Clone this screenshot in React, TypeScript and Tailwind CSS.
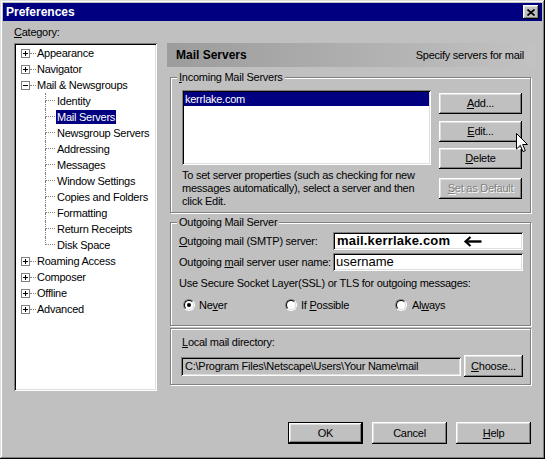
import React from "react";

const raised =
  "shadow-[inset_-1px_-1px_#000,inset_1px_1px_#fff,inset_-2px_-2px_#808080,inset_2px_2px_#dfdfdf]";
const sunken =
  "shadow-[inset_1px_1px_#808080,inset_-1px_-1px_#fff,inset_2px_2px_#000,inset_-2px_-2px_#dfdfdf]";
const etched = "border border-[#808080] shadow-[inset_1px_1px_#fff,1px_1px_#fff]";

function Box({ open }: { open?: boolean }) {
  return (
    <div className="ml-[5px] grid h-[9px] w-[9px] place-items-center border border-[#808080] bg-white">
      <div className="col-start-1 row-start-1 h-[1px] w-[5px] bg-black" />
      {!open && <div className="col-start-1 row-start-1 h-[5px] w-[1px] bg-black" />}
    </div>
  );
}

function TopRow({ label, open }: { label: string; open?: boolean }) {
  return (
    <div className="flex h-[16px] items-center">
      <Box open={open} />
      <div className="h-0 w-[6px] border-t border-dotted border-[#808080]" />
      <span className="ml-[1px] whitespace-nowrap">{label}</span>
    </div>
  );
}

function ChildRow({ label, last, selected }: { label: string; last?: boolean; selected?: boolean }) {
  return (
    <div className="flex h-[16px]">
      <div className="ml-[29px] flex w-[10px] flex-col">
        <div className="h-[8px] border-b border-l border-dotted border-[#808080]" />
        <div className={last ? "h-[8px]" : "h-[8px] border-l border-dotted border-[#808080]"} />
      </div>
      <span
        className={
          selected
            ? "ml-[1px] self-center whitespace-nowrap bg-[#000080] px-[1px] leading-[14px] text-white"
            : "ml-[1px] self-center whitespace-nowrap px-[1px] leading-[14px]"
        }
      >
        {label}
      </span>
    </div>
  );
}

function Btn({ children, className }: { children: React.ReactNode; className?: string }) {
  return (
    <div className={`flex items-center justify-center bg-[#c0c0c0] ${raised} ${className ?? ""}`}>{children}</div>
  );
}

function Radio({ checked }: { checked?: boolean }) {
  return (
    <div className="h-[12px] w-[12px] rounded-full border border-b-white border-l-[#808080] border-r-white border-t-[#808080]">
      <div className="flex h-full w-full items-center justify-center rounded-full border border-b-[#dfdfdf] border-l-black border-r-[#dfdfdf] border-t-black bg-white">
        {checked && <div className="h-[4px] w-[4px] rounded-full bg-black" />}
      </div>
    </div>
  );
}

export default function App() {
  return (
    <div className="flex h-[459px] w-[545px] flex-col bg-[#c0c0c0] p-[3px] font-['Liberation_Sans',Arial,sans-serif] text-[11px] leading-[13px] tracking-[-0.25px] text-black shadow-[inset_-1px_-1px_#000,inset_1px_1px_#dfdfdf,inset_-2px_-2px_#808080,inset_2px_2px_#fff]">
      {/* Title bar */}
      <div className="flex h-[18px] items-center justify-between bg-[#000080] pl-[3px] pr-[3px]">
        <span className="text-[12px] font-bold leading-[14px] tracking-normal text-white">Preferences</span>
        <div className={`flex h-[14px] w-[16px] items-center justify-center bg-[#c0c0c0] ${raised}`}>
          <svg width="8" height="7" viewBox="0 0 8 7">
            <path d="M0.5 0.5 L7.5 6.5 M7.5 0.5 L0.5 6.5" stroke="#000" strokeWidth="1.7" fill="none" />
          </svg>
        </div>
      </div>

      <div className="flex">
        {/* Left: category tree */}
        <div className="ml-[11px] flex w-[143px] flex-col">
          <div className="mt-[5px] h-[13px]">
            <u>C</u>ategory:
          </div>
          <div className={`mt-[4px] h-[348px] bg-white p-[2px] ${sunken}`}>
            <TopRow label="Appearance" />
            <TopRow label="Navigator" />
            <TopRow label="Mail & Newsgroups" open />
            <ChildRow label="Identity" />
            <ChildRow label="Mail Servers" selected />
            <ChildRow label="Newsgroup Servers" />
            <ChildRow label="Addressing" />
            <ChildRow label="Messages" />
            <ChildRow label="Window Settings" />
            <ChildRow label="Copies and Folders" />
            <ChildRow label="Formatting" />
            <ChildRow label="Return Receipts" />
            <ChildRow label="Disk Space" last />
            <TopRow label="Roaming Access" />
            <TopRow label="Composer" />
            <TopRow label="Offline" />
            <TopRow label="Advanced" />
          </div>
        </div>

        {/* Right panel */}
        <div className="ml-[10px] mt-[22px] flex w-[369px] flex-col">
          <div className="flex h-[24px] items-center justify-between bg-gradient-to-r from-[#9c9c9c] to-[#c2c2c2] pl-[9px] pr-[12px]">
            <span className="text-[12px] font-bold tracking-normal">Mail Servers</span>
            <span>Specify servers for mail</span>
          </div>

          {/* Incoming */}
          <div className={`relative ml-[3px] mr-[5px] mt-[10px] h-[136px] ${etched}`}>
            <span className="absolute -top-[7px] left-[6px] whitespace-nowrap bg-[#c0c0c0] px-[2px]">
              <u>I</u>ncoming Mail Servers
            </span>
            <div className="flex pl-[11px] pt-[12px]">
              <div className="flex w-[249px] flex-col">
                <div className={`h-[75px] bg-white p-[2px] ${sunken}`}>
                  <div className="flex h-[14px] items-center bg-[#000080] pl-[1px] text-white">kerrlake.com</div>
                </div>
                <div className="mt-[4px] whitespace-nowrap leading-[13px]">
                  To set server properties (such as checking for new
                  <br />
                  messages automatically), select a server and then
                  <br />
                  click Edit.
                </div>
              </div>
              <div className="ml-[8px] flex w-[83px] flex-col pt-[3px]">
                <Btn className="h-[21px]">
                  <span>
                    <u>A</u>dd...
                  </span>
                </Btn>
                <Btn className="relative mt-[7px] h-[21px]">
                  <span>
                    <u>E</u>dit...
                  </span>
                  <svg
                    className="absolute left-[77px] top-[12px]"
                    width="12"
                    height="20"
                    viewBox="0 0 12 20"
                  >
                    <path
                      d="M0.5 0.5 V16 L4.3 12.3 L7 18.6 L9.3 17.6 L6.7 11.5 H11.5 Z"
                      fill="#fff"
                      stroke="#000"
                      strokeWidth="1"
                    />
                  </svg>
                </Btn>
                <Btn className="mt-[6px] h-[21px]">
                  <span>
                    <u>D</u>elete
                  </span>
                </Btn>
                <Btn className="mt-[9px] h-[21px]">
                  <span className="whitespace-nowrap text-[#808080] [text-shadow:1px_1px_0_#fff]">
                    <u>S</u>et as Default
                  </span>
                </Btn>
              </div>
            </div>
          </div>

          {/* Outgoing */}
          <div className={`relative ml-[3px] mr-[5px] mt-[9px] h-[104px] ${etched}`}>
            <span className="absolute -top-[7px] left-[6px] whitespace-nowrap bg-[#c0c0c0] px-[2px]">
              Outgoing Mail Server
            </span>
            <div className="flex flex-col pl-[8px] pr-[7px] pt-[9px]">
              <div className="flex h-[18px] items-center">
                <span className="flex-1 whitespace-nowrap">
                  <u>O</u>utgoing mail (SMTP) server:
                </span>
                <div className={`flex h-[18px] w-[190px] shrink-0 items-center bg-white pl-[4px] ${sunken}`}>
                  <span className="whitespace-nowrap text-[13px] font-bold leading-[16px] tracking-[0.2px]">
                    mail.kerrlake.com
                  </span>
                  <svg className="ml-[13px]" width="19" height="11" viewBox="0 0 19 11">
                    <path d="M18.5 5.5 H3" stroke="#000" strokeWidth="2.4" fill="none" />
                    <path d="M7.5 1 L2.5 5.5 L7.5 10" stroke="#000" strokeWidth="2.2" fill="none" />
                  </svg>
                </div>
              </div>
              <div className="mt-[3px] flex h-[18px] items-center">
                <span className="flex-1 whitespace-nowrap">
                  Outgoing <u>m</u>ail server user name:
                </span>
                <div className={`flex h-[18px] w-[190px] shrink-0 items-center bg-white pl-[3px] ${sunken}`}>
                  <span className="text-[13px] leading-[16px] tracking-normal">username</span>
                </div>
              </div>
              <div className="mt-[6px] whitespace-nowrap">
                Use Secure Socket Layer(SSL) or TLS for outgoing messages:
              </div>
              <div className="ml-[4px] mt-[7px] flex h-[16px] items-center">
                <div className="flex w-[102px] items-center gap-[4px]">
                  <Radio checked />
                  <span>
                    Ne<u>v</u>er
                  </span>
                </div>
                <div className="flex w-[110px] items-center gap-[4px]">
                  <Radio />
                  <span className="whitespace-nowrap">
                    If <u>P</u>ossible
                  </span>
                </div>
                <div className="flex items-center gap-[5px]">
                  <Radio />
                  <span>
                    Al<u>w</u>ays
                  </span>
                </div>
              </div>
            </div>
          </div>

          {/* Local mail directory */}
          <div className={`ml-[3px] mr-[5px] mt-[2px] h-[57px] ${etched}`}>
            <div className="ml-[11px] mt-[7px]">
              <u>L</u>ocal mail directory:
            </div>
            <div className="ml-[10px] mt-[6px] flex h-[22px] items-center">
              <div className={`flex h-[19px] w-[280px] items-center bg-[#c0c0c0] pl-[4px] ${sunken}`}>
                <span className="whitespace-nowrap">C:\Program Files\Netscape\Users\Your Name\mail</span>
              </div>
              <Btn className="ml-[3px] h-[22px] w-[59px]">
                <span>
                  <u>C</u>hoose...
                </span>
              </Btn>
            </div>
          </div>
        </div>
      </div>

      {/* Bottom buttons */}
      <div className="mt-[31px] flex justify-end gap-[9px] pr-[11px]">
        <div
          className={`flex h-[22px] w-[75px] items-center justify-center border border-black bg-[#c0c0c0] ${raised}`}
        >
          OK
        </div>
        <Btn className="h-[22px] w-[75px]">Cancel</Btn>
        <Btn className="h-[22px] w-[75px]">
          <span>
            <u>H</u>elp
          </span>
        </Btn>
      </div>
    </div>
  );
}
